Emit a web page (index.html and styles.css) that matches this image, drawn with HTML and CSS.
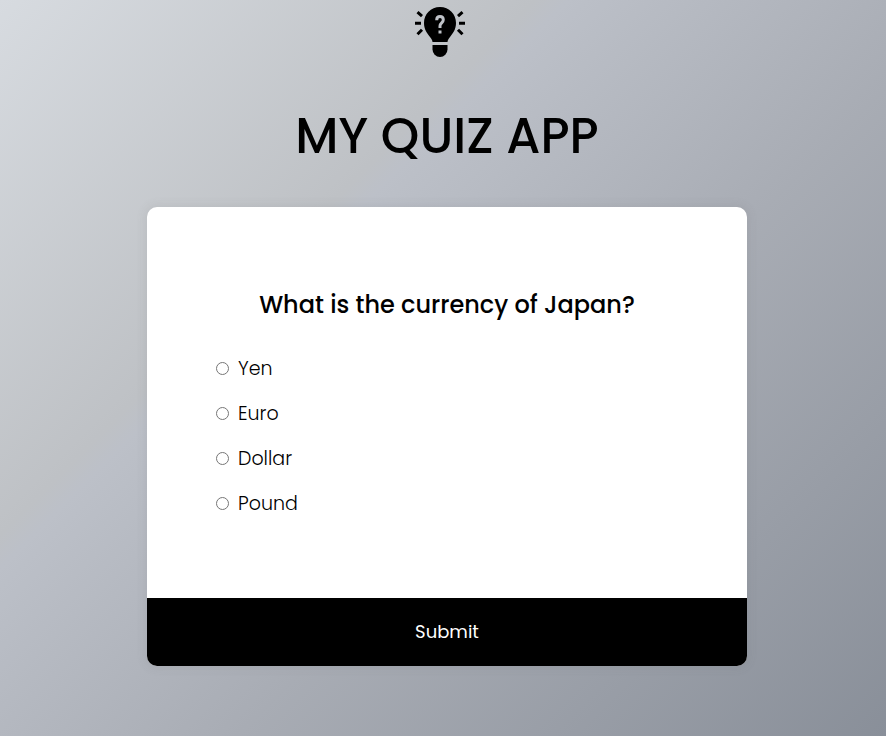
FILE: index.html
```html
<!DOCTYPE html>
<html lang="en">
<head>
<meta charset="utf-8">
<meta name="viewport" content="width=device-width, initial-scale=1">
<title>My Quiz App</title>
<link rel="stylesheet" href="styles.css">
</head>
<body>
<header class="header">
  <svg class="logo" viewBox="0 0 50 50" aria-hidden="true">
    <path d="M25 0C15.800 0 9 7 9 16c0 6.500 3 10 6 14 1.800 2.500 2.300 3.300 2.500 5h15c.2-1.700.7-2.500 2.500-5 3-4 6-7.500 6-14C41 7 34.200 0 25 0z"/>
    <path d="M17.500 38h15v4.500a7.500 7.500 0 0 1-15 0z"/>
    <path class="rays" d="M0 16.200h6M44 16.200h6M2.500 5.200l4.500 4M47.500 5.200l-4.500 4M2.500 27.200l4.500-4.500M47.500 27.200l-4.500-4.500"/>
    <path class="mark" d="M21.700 13.200c0-2.500 1.500-3.600 3.300-3.600s3.300 1.200 3.300 3.200c0 3-3.300 3-3.300 6.200v2"/>
    <path class="dot" d="M23.500 23.500h3v3h-3z"/>
  </svg>
  <h1 class="title">MY QUIZ APP</h1>
</header>
<main>
  <form class="quiz">
    <fieldset class="quiz-body">
      <legend class="question">What is the currency of Japan?</legend>
      <ul class="answers">
        <li><input type="radio" name="answer" id="a"><label for="a">Yen</label></li>
        <li><input type="radio" name="answer" id="b"><label for="b">Euro</label></li>
        <li><input type="radio" name="answer" id="c"><label for="c">Dollar</label></li>
        <li><input type="radio" name="answer" id="d"><label for="d">Pound</label></li>
      </ul>
    </fieldset>
    <button class="submit" type="button">Submit</button>
  </form>
</main>
</body>
</html>
```
FILE: styles.css
```css
* {
  box-sizing: border-box;
}

body {
  margin: 0;
  min-height: 100vh;
  padding: 7px 0 70px 8px;
  font-family: Poppins, Inter, sans-serif;
  color: #000;
  background: linear-gradient(135deg, #d7dbe0 0%, #bec1c5 33%, #bcc0c8 35%, #a8acb4 60%, #898f99 100%);
}

.header {
  display: flex;
  flex-direction: column;
  align-items: center;
}

.logo {
  width: 50px;
  height: 50px;
  margin-right: 14px;
}

.rays {
  fill: none;
  stroke: #000;
  stroke-width: 3;
}

.mark {
  fill: none;
  stroke: #bfc2c8;
  stroke-width: 3;
}

.dot {
  fill: #bfc2c8;
}

.title {
  margin: 40px 0 32px;
  font-size: 49px;
  line-height: 78px;
  font-weight: 500;
}

.quiz {
  width: 100%;
  max-width: 600px;
  margin: 0 auto;
  overflow: hidden;
  background: #fff;
  border-radius: 10px;
  box-shadow: 0 0 10px 2px rgba(100, 100, 100, 0.1);
}

.quiz-body {
  margin: 0;
  padding: 78px 64px 72px;
  border: 0;
}

.question {
  float: left;
  width: 100%;
  padding: 0;
  font-size: 24px;
  line-height: 40px;
  font-weight: 500;
  text-align: center;
}

.answers {
  clear: both;
  margin: 0;
  padding: 21px 0 0;
  list-style: none;
  font-size: 19px;
  line-height: 29px;
  font-weight: 300;
}

.answers li {
  display: flex;
  align-items: center;
  gap: 9px;
  padding: 8px 5px;
}

.answers input {
  width: 13px;
  height: 13px;
  margin: 0;
}

.submit {
  display: block;
  width: 100%;
  padding: 20px;
  border: 0;
  background: #000;
  color: #fff;
  font-family: inherit;
  font-size: 18px;
  line-height: 28px;
}
```
